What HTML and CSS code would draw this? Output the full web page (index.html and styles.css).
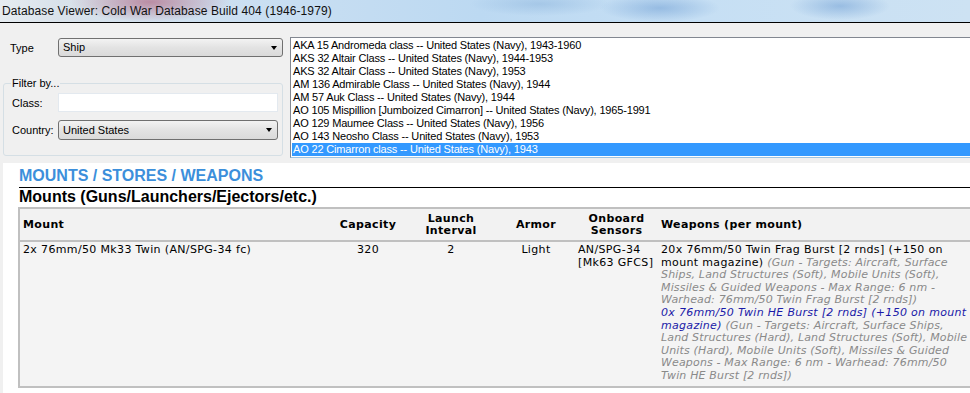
FILE: index.html
```html
<!DOCTYPE html>
<html lang="en">

<head>
    <meta charset="UTF-8">
    <title>Database Viewer</title>
    <link rel="stylesheet" href="styles.css">
</head>

<body>
    <div class="titlebar">Database Viewer: Cold War Database Build 404 (1946-1979)</div>

    <div class="form">
        <div class="side">
            <div class="typerow">
                <label>Type</label>
                <div class="combo">Ship<span class="arrow"></span></div>
            </div>
            <fieldset class="group">
                <legend>Filter by...</legend>
                <div class="row first">
                    <label>Class:</label>
                    <div class="textbox"></div>
                </div>
                <div class="row">
                    <label>Country:</label>
                    <div class="combo small">United States<span class="arrow"></span></div>
                </div>
            </fieldset>
        </div>
        <ul class="listbox">
            <li>AKA 15 Andromeda class -- United States (Navy), 1943-1960</li>
            <li>AKS 32 Altair Class -- United States (Navy), 1944-1953</li>
            <li>AKS 32 Altair Class -- United States (Navy), 1953</li>
            <li>AM 136 Admirable Class -- United States (Navy), 1944</li>
            <li>AM 57 Auk Class -- United States (Navy), 1944</li>
            <li>AO 105 Mispillion [Jumboized Cimarron] -- United States (Navy), 1965-1991</li>
            <li>AO 129 Maumee Class -- United States (Navy), 1956</li>
            <li>AO 143 Neosho Class -- United States (Navy), 1953</li>
            <li class="selected">AO 22 Cimarron class -- United States (Navy), 1943</li>
        </ul>
    </div>

    <div class="browser">
        <h2>MOUNTS / STORES / WEAPONS</h2>
        <h3>Mounts (Guns/Launchers/Ejectors/etc.)</h3>
        <table class="mounts">
            <colgroup>
                <col class="c-mount">
                <col class="c-cap">
                <col class="c-launch">
                <col class="c-armor">
                <col class="c-sensor">
                <col class="c-weap">
            </colgroup>
            <tr class="head">
                <th class="left">Mount</th>
                <th>Capacity</th>
                <th>Launch<br>Interval</th>
                <th>Armor</th>
                <th>Onboard<br>Sensors</th>
                <th class="left">Weapons (per mount)</th>
            </tr>
            <tr class="data">
                <td>2x 76mm/50 Mk33 Twin (AN/SPG-34 fc)</td>
                <td class="mid">320</td>
                <td class="mid">2</td>
                <td class="mid">Light</td>
                <td>AN/SPG-34<br>[Mk63 GFCS]</td>
                <td class="weapons">20x 76mm/50 Twin Frag Burst [2 rnds] (+150 on<br>mount magazine) <span class="note">(Gun - Targets: Aircraft, Surface<br>Ships, Land Structures (Soft), Mobile Units (Soft),<br>Missiles &amp; Guided Weapons - Max Range: 6 nm -<br>Warhead: 76mm/50 Twin Frag Burst [2 rnds])</span><br><span class="alt">0x 76mm/50 Twin HE Burst [2 rnds] (+150 on mount<br>magazine)</span> <span class="note">(Gun - Targets: Aircraft, Surface Ships,<br>Land Structures (Hard), Land Structures (Soft), Mobile<br>Units (Hard), Mobile Units (Soft), Missiles &amp; Guided<br>Weapons - Max Range: 6 nm - Warhead: 76mm/50<br>Twin HE Burst [2 rnds])</span></td>
            </tr>
        </table>
    </div>
</body>

</html>
```

FILE: styles.css
```css
body {
    margin: 0;
    width: 970px;
    height: 393px;
    overflow: hidden;
    background-color: #f0f0f0;
    font-family: "Liberation Sans", Arial, sans-serif;
}

.titlebar {
    height: 22px;
    line-height: 22px;
    padding-left: 2px;
    font-size: 12px;
    letter-spacing: 0.1px;
    color: #111;
    border-bottom: 1px solid #000;
    background:
        radial-gradient(ellipse 80px 20px at 150px 2px, rgba(180, 120, 145, 0.8), rgba(180, 120, 145, 0) 100%),
        radial-gradient(ellipse 60px 14px at 660px 8px, rgba(120, 165, 215, 0.6), rgba(120, 165, 215, 0) 100%),
        radial-gradient(ellipse 50px 14px at 840px 6px, rgba(120, 165, 215, 0.6), rgba(120, 165, 215, 0) 100%),
        radial-gradient(ellipse 70px 12px at 540px 4px, rgba(140, 180, 220, 0.5), rgba(140, 180, 220, 0) 100%),
        linear-gradient(to right, #e6ecf1 0px, #d9e2ea 60px, #cadff2 260px, #bcd9f2 480px, #c6dff4 700px, #cde2f3 970px);
}

.form {
    display: flex;
    height: 140px;
    font-size: 11px;
}

.side {
    width: 280px;
    margin-left: 3px;
    padding-top: 15px;
}

.typerow {
    display: flex;
    align-items: center;
    padding-left: 7px;
}

.typerow label {
    width: 48px;
}

.combo {
    position: relative;
    width: 219px;
    height: 17px;
    line-height: 17px;
    padding-left: 4px;
    border: 1px solid #707070;
    border-radius: 3px;
    background: linear-gradient(#f3f3f3, #e3e3e3 50%, #dadada);
}

.combo.small {
    width: 214px;
    height: 18px;
    line-height: 18px;
}

.arrow {
    position: absolute;
    right: 5px;
    top: 7px;
    border-left: 3.5px solid transparent;
    border-right: 3.5px solid transparent;
    border-top: 4px solid #000;
}

.group {
    margin: 20px 0 0;
    padding: 0 0 0 8px;
    height: 77px;
    border: 1px solid #d5dfe5;
    border-radius: 3px;
}

.group legend {
    padding: 0 1px;
    margin-left: -1px;
}

.row {
    display: flex;
    align-items: center;
    margin-top: 8px;
}

.row.first {
    margin-top: 4px;
}

.row label {
    width: 46px;
}

.textbox {
    width: 218px;
    height: 17px;
    background: #fff;
    border: 1px solid #e3e9ef;
}

.listbox {
    list-style: none;
    flex: 1;
    margin: 14px -3px 0 7px;
    padding: 1px 0 0 1px;
    height: 118px;
    background: #fff;
    border: 1px solid #828790;
    border-bottom-color: #9ec3e0;
}

.listbox li {
    height: 13px;
    line-height: 13px;
    padding-left: 1px;
    letter-spacing: -0.17px;
    white-space: nowrap;
}

.listbox .selected {
    background: #3399ff;
    color: #fff;
}

.browser {
    margin-left: 3px;
    height: 240px;
    background: #fff;
    padding: 4px 0 0 16px;
}

h2 {
    margin: 0;
    font-size: 16px;
    line-height: 18px;
    color: #3c8fdb;
    font-weight: bold;
    border-bottom: 1px solid #000;
    padding-bottom: 2px;
}

h3 {
    margin: 0;
    font-size: 16px;
    line-height: 18px;
    font-weight: bold;
    color: #000;
}

.mounts {
    width: 962px;
    margin: 1px 0 0 -1px;
    table-layout: fixed;
    border-collapse: collapse;
    border: 2px solid #c0c0c0;
    font-family: "DejaVu Sans", Verdana, sans-serif;
    font-size: 11px;
    letter-spacing: 0.35px;
}

.c-mount { width: 312px; }
.c-cap { width: 74px; }
.c-launch { width: 92px; }
.c-armor { width: 78px; }
.c-sensor { width: 83px; }

.head {
    background: #f2f2f2;
    border-bottom: 2px solid #c0c0c0;
}

th {
    height: 31px;
    padding: 0 3px;
    line-height: 12px;
    text-align: center;
    vertical-align: middle;
}

th.left {
    text-align: left;
}

.data {
    background: #f4f4f4;
}

td {
    vertical-align: top;
    padding: 2px 3px 3px;
    line-height: 12.6px;
}

td.mid {
    text-align: center;
}

td.weapons {
    white-space: nowrap;
}

.note {
    font-style: italic;
    color: #8a8a8a;
    letter-spacing: 0.16px;
}

.alt {
    font-style: italic;
    color: #1a1aa8;
    letter-spacing: 0.3px;
}
```
